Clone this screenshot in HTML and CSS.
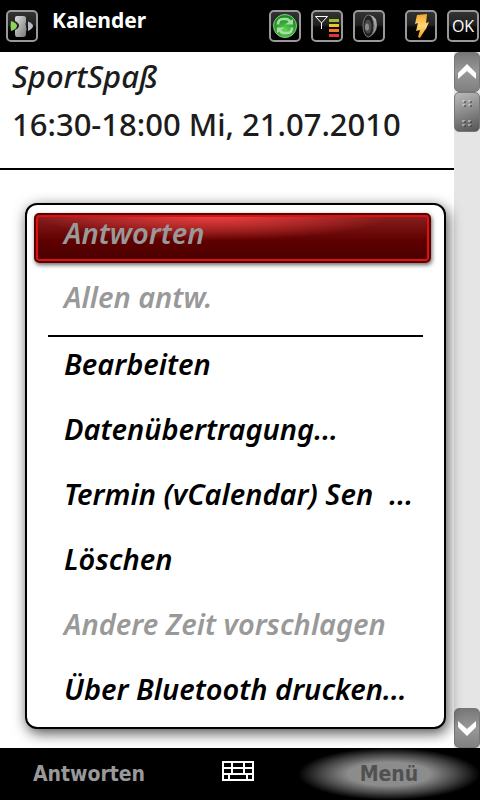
FILE: index.html
```
<!DOCTYPE html>
<html lang="de">
<head>
    <meta charset="UTF-8">
    <meta name="viewport" content="width=device-width, initial-scale=1.0">
    <title>Kalender</title>
    <link rel="stylesheet" href="styles.css">
</head>
<body>

<!-- shared gradients for the icons -->
<svg class="defs" width="0" height="0" aria-hidden="true">
    <defs>
        <linearGradient id="silver" x1="0" y1="0" x2="1" y2="1">
            <stop offset="0" stop-color="#ddd"/>
            <stop offset="1" stop-color="#777"/>
        </linearGradient>
        <radialGradient id="green" cx=".5" cy=".7" r=".6">
            <stop offset="0" stop-color="#5fd653"/>
            <stop offset="1" stop-color="#168a1d"/>
        </radialGradient>
        <linearGradient id="gold" x1="0" y1="0" x2="0" y2="1">
            <stop offset="0" stop-color="#f7a52b"/>
            <stop offset=".5" stop-color="#ffd877"/>
            <stop offset="1" stop-color="#f39a12"/>
        </linearGradient>
    </defs>
</svg>

<header class="topbar">
    <button class="tile" aria-label="Start">
        <svg viewBox="0 0 28 28">
            <path d="M7 6q0-2 2-2h6q3 0 3 2v4q-1 2 0 4t0 6v2q0 3-3 3H9q-2 0-2-3v-4q4-2 4-4.500T7 9z" fill="url(#silver)"/>
            <path d="M3 9q6 2 6 5t-6 5q-1-5 0-10z" fill="#8ed45c"/>
            <path d="M20 9.500q5 2 5 4.500t-5 5z" fill="#b8bcc0"/>
        </svg>
    </button>
    <h1 class="title">Kalender</h1>
    <div class="status">
        <button class="tile" aria-label="Synchronisieren">
            <svg viewBox="0 0 28 28">
                <circle cx="14" cy="14" r="11.500" fill="url(#green)" stroke="#8fca8b"/>
                <path d="M7 12.500q0-5.500 5-5.500h3q3 0 4 3M21 15.500q0 5.500-5 5.500h-3q-3 0-4-3" fill="none" stroke="#a9dba6" stroke-width="2.500"/>
                <path d="M14 12.500h8V7zM14 15.500H6V21z" fill="#a9dba6"/>
            </svg>
        </button>
        <button class="tile" aria-label="Signal">
            <svg viewBox="0 0 28 28">
                <path d="M2.500 4.500h12L8.500 11zM8.500 11v6" fill="none" stroke="#fff"/>
                <path d="M16 7h10v3H16z" fill="#a4bd2c"/>
                <path d="M16 12h10v3H16z" fill="#f4c51c"/>
                <path d="M16 17h10v3H16z" fill="#f07c28"/>
                <path d="M16 22h10v3H16z" fill="#e5352c"/>
            </svg>
        </button>
        <button class="tile" aria-label="Ton">
            <svg viewBox="0 0 28 28">
                <path d="M15 3q7 2 7 10t-8 12z" fill="url(#silver)"/>
                <ellipse cx="13.500" cy="14" rx="5.500" ry="11" fill="#222" stroke="#777"/>
                <ellipse cx="13" cy="14.500" rx="3.500" ry="7" fill="#4a4a4a"/>
                <ellipse cx="12" cy="15" rx="2" ry="3.500" fill="#8a8a8a"/>
            </svg>
        </button>
        <button class="tile tile-power" aria-label="Akku">
            <svg viewBox="0 0 28 28">
                <path d="M10 3l10-1-1 9 3-1-3 7-1 1-5 8-2-1 2-7-4 1 2-8-3 1z" fill="url(#gold)"/>
            </svg>
        </button>
        <button class="tile">OK</button>
    </div>
</header>

<main class="screen">
    <section class="content">
        <div class="appointment">
            <h2 class="subject">SportSpaß</h2>
            <p class="time">16:30-18:00 Mi, 21.07.2010</p>
        </div>
    </section>

    <div class="scrollbar">
        <button class="arrow" aria-label="Nach oben">
            <svg viewBox="0 0 24 38"><path d="M3 20l9-9 9 9v6l-9-8-9 8z" fill="#fff"/></svg>
        </button>
        <div class="thumb">
            <svg viewBox="0 0 24 38">
                <path d="M7 8h3M13 8h3M7 12h3M13 12h3M7 28h3M13 28h3M7 32h3M13 32h3" stroke="#ddd"/>
                <path d="M9 9h2M15 9h2M9 13h2M15 13h2M9 29h2M15 29h2M9 33h2M15 33h2" stroke="#333"/>
            </svg>
        </div>
        <button class="arrow arrow-down" aria-label="Nach unten">
            <svg viewBox="0 0 24 38"><path d="M3 12l9 8 9-8v6l-9 9-9-9z" fill="#fff"/></svg>
        </button>
    </div>

    <div class="menu" role="menu">
        <button class="item selected disabled" role="menuitem" aria-disabled="true">Antworten</button>
        <button class="item disabled" role="menuitem" aria-disabled="true">Allen antw.</button>
        <hr class="separator">
        <button class="item" role="menuitem">Bearbeiten</button>
        <button class="item" role="menuitem">Datenübertragung...</button>
        <button class="item item-cut" role="menuitem"><span>Termin (vCalendar) Sen</span><span>...</span></button>
        <button class="item" role="menuitem">Löschen</button>
        <button class="item disabled" role="menuitem" aria-disabled="true">Andere Zeit vorschlagen</button>
        <button class="item" role="menuitem">Über Bluetooth drucken...</button>
    </div>
</main>

<footer class="softkeys">
    <button class="softkey">Antworten</button>
    <button class="keyboard" aria-label="Tastatur">
        <svg viewBox="0 0 32 20" width="32" height="20">
            <path d="M1 1h30v18H1zM1 7h30M1 13h30M10 1v12M22 1v12M7 13v6M25 13v6" fill="none" stroke="#fff" stroke-width="2"/>
        </svg>
    </button>
    <button class="softkey active">Menü</button>
</footer>

</body>
</html>
```
FILE: styles.css
```
* {
    box-sizing: border-box;
}

body {
    display: flex;
    flex-direction: column;
    min-height: 100vh;
    margin: 0;
    background: #fff;
    font-family: "Noto Sans", sans-serif;
}

button {
    padding: 0;
    border: none;
    background: none;
    font-family: inherit;
    cursor: pointer;
}

svg {
    display: block;
}

.defs {
    position: absolute;
}

/* top bar */
.topbar {
    display: flex;
    align-items: center;
    height: 52px;
    padding: 0 1px 0 6px;
    background: #000;
}

.tile {
    width: 32px;
    height: 32px;
    border: 2px solid #999;
    border-radius: 5px;
    background: linear-gradient(#333, #222 45%, #080808 55%, #000);
    color: #fff;
    font-family: "Open Sans", sans-serif;
    font-size: 16px;
}

.title {
    margin: 0 0 12px 14px;
    color: #fff;
    font-size: 21px;
    line-height: 24px;
}

.status {
    display: flex;
    gap: 10px;
    margin-left: auto;
}

.tile-power {
    margin-left: 10px;
}

/* calendar entry */
.screen {
    position: relative;
    display: flex;
    flex: 1;
}

.content {
    flex: 1;
}

.appointment {
    height: 118px;
    padding-left: 12px;
    border-bottom: 2px solid #000;
    color: #1c1c1c;
}

.subject,
.time {
    margin: 0;
    font-size: 31px;
    font-weight: 500;
    line-height: 48px;
}

.subject {
    font-style: italic;
}

/* scrollbar */
.scrollbar {
    display: flex;
    flex-direction: column;
    width: 26px;
    background: #e5e5e5;
}

.arrow,
.thumb {
    height: 40px;
    border: 1px solid #777;
    border-radius: 5px;
    background: linear-gradient(#777, #999 50%, #808080);
}

.thumb {
    background: linear-gradient(160deg, #bbb, #888 50%, #555);
}

.arrow-down {
    margin-top: auto;
}

/* popup menu */
.menu {
    position: absolute;
    top: 151px;
    right: 34px;
    bottom: 19px;
    left: 25px;
    display: flex;
    flex-direction: column;
    padding: 8px 13px 5px 7px;
    border: 2px solid #000;
    border-radius: 12px;
    background: #fff;
    box-shadow: 2px 4px 14px rgba(0, 0, 0, 0.7);
}

.item {
    flex: none;
    height: 65px;
    padding: 0 0 2px 30px;
    color: #000;
    font-size: 29px;
    font-style: italic;
    font-weight: 600;
    line-height: 36px;
    text-align: left;
    white-space: nowrap;
}

.disabled {
    color: #999;
}

.selected {
    height: 50px;
    margin-bottom: 2px;
    padding: 0 0 10px 28px;
    border: 2px solid #5a0000;
    border-radius: 5px;
    background:
        radial-gradient(ellipse 45% 55% at 45% 0, #f04040, transparent),
        linear-gradient(#8a2020, #600000 55%, #480000);
    box-shadow: inset 0 0 0 2px #dd1111, 1px 2px 4px rgba(0, 0, 0, 0.6);
}

.item-cut {
    display: flex;
    align-items: center;
    gap: 16px;
}

.separator {
    flex: none;
    height: 2px;
    margin: 5px 8px -5px 14px;
    border: none;
    background: #000;
}

/* soft keys */
.softkeys {
    display: grid;
    grid-template-columns: 178px 1fr 182px;
    height: 52px;
    background: #000;
}

.softkey {
    color: #999;
    font-family: "DejaVu Sans Condensed", "DejaVu Sans", sans-serif;
    font-size: 21px;
    font-weight: bold;
}

.active {
    background: radial-gradient(closest-side, #8c8c8c 45%, #444 75%, #000);
    color: #505050;
}

.keyboard {
    padding-bottom: 6px;
}

.keyboard svg {
    margin: 0 auto;
}
```
